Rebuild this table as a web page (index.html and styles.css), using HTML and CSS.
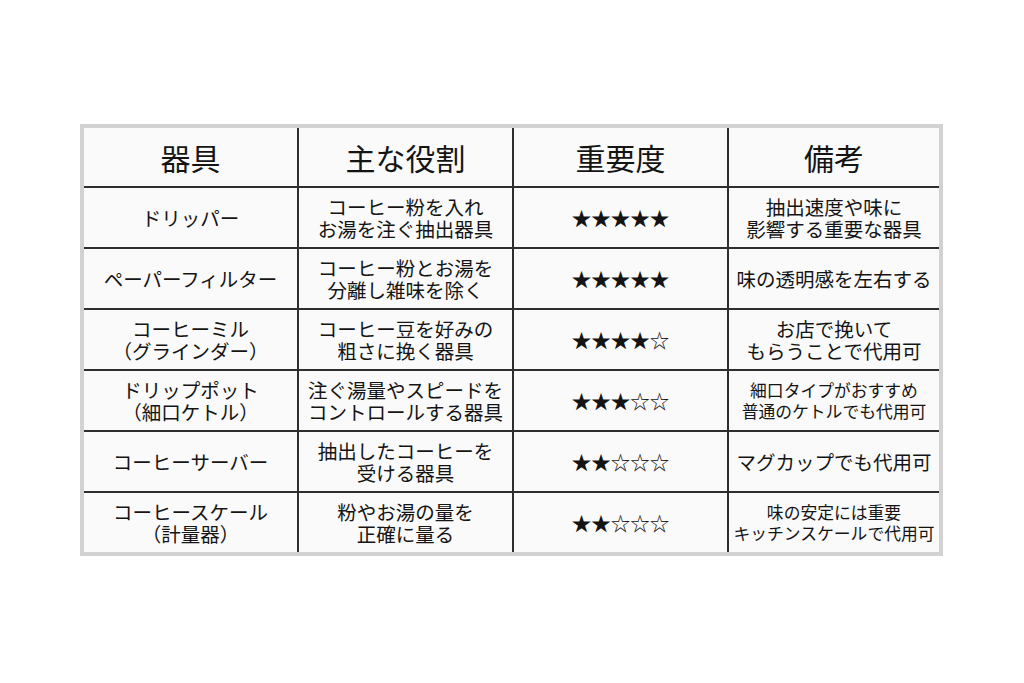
FILE: index.html
```html
<!DOCTYPE html>
<html lang="ja">
<head>
<meta charset="utf-8">
<link rel="stylesheet" href="styles.css">
</head>
<body>
<div class="page">
  <div class="frame">
    <table class="tbl">
      <colgroup>
        <col class="c1"><col class="c2"><col class="c3"><col class="c4">
      </colgroup>
      <thead>
        <tr class="head"><th>器具</th><th>主な役割</th><th>重要度</th><th>備考</th></tr>
      </thead>
      <tbody>
        <tr><td>ドリッパー</td><td>コーヒー粉を入れ<br>お湯を注ぐ抽出器具</td><td class="stars">★★★★★</td><td>抽出速度や味に<br>影響する重要な器具</td></tr>
        <tr><td>ペーパーフィルター</td><td>コーヒー粉とお湯を<br>分離し雑味を除く</td><td class="stars">★★★★★</td><td>味の透明感を左右する</td></tr>
        <tr><td>コーヒーミル<br>（グラインダー）</td><td>コーヒー豆を好みの<br>粗さに挽く器具</td><td class="stars">★★★★<span class="o">☆</span></td><td>お店で挽いて<br>もらうことで代用可</td></tr>
        <tr><td>ドリップポット<br>（細口ケトル）</td><td>注ぐ湯量やスピードを<br>コントロールする器具</td><td class="stars">★★★<span class="o">☆☆</span></td><td class="small">細口タイプがおすすめ<br>普通のケトルでも代用可</td></tr>
        <tr><td>コーヒーサーバー</td><td>抽出したコーヒーを<br>受ける器具</td><td class="stars">★★<span class="o">☆☆☆</span></td><td>マグカップでも代用可</td></tr>
        <tr><td>コーヒースケール<br>（計量器）</td><td>粉やお湯の量を<br>正確に量る</td><td class="stars">★★<span class="o">☆☆☆</span></td><td class="small">味の安定には重要<br>キッチンスケールで代用可</td></tr>
      </tbody>
    </table>
  </div>
</div>
</body>
</html>
```
FILE: styles.css
```css
html, body {
  margin: 0;
  padding: 0;
  background: #ffffff;
}
body {
  font-family: "Noto Sans CJK JP", "Noto Sans", sans-serif;
  color: #141414;
}
.page {
  width: 1024px;
  height: 683px;
  padding: 124px 0 0 80px;
  box-sizing: border-box;
}
.frame {
  width: 863px;
  border: 4px solid #d2d2d2;
  box-sizing: border-box;
  background: #fafafa;
}
.tbl {
  width: 855px;
  border-collapse: collapse;
  table-layout: fixed;
}
.c1 { width: 214px; }
.c2 { width: 215px; }
.c3 { width: 215px; }
.c4 { width: 211px; }
.tbl th, .tbl td {
  border: 2px solid #2e2e2e;
  text-align: center;
  vertical-align: middle;
  padding: 0;
  font-weight: normal;
  line-height: 22px;
  font-size: 19.5px;
  height: 59px;
}
.tbl tr > :first-child { border-left: none; }
.tbl tr > :last-child { border-right: none; }
.tbl thead th { border-top: none; font-size: 30px; height: 58px; line-height: 34px; }
.tbl tbody tr:last-child td { border-bottom: none; }
.tbl td.small { font-size: 16.8px; line-height: 21px; }
.tbl td.stars { font-size: 19.5px; letter-spacing: 0; }
.o { font-size: 19.5px; }
```
